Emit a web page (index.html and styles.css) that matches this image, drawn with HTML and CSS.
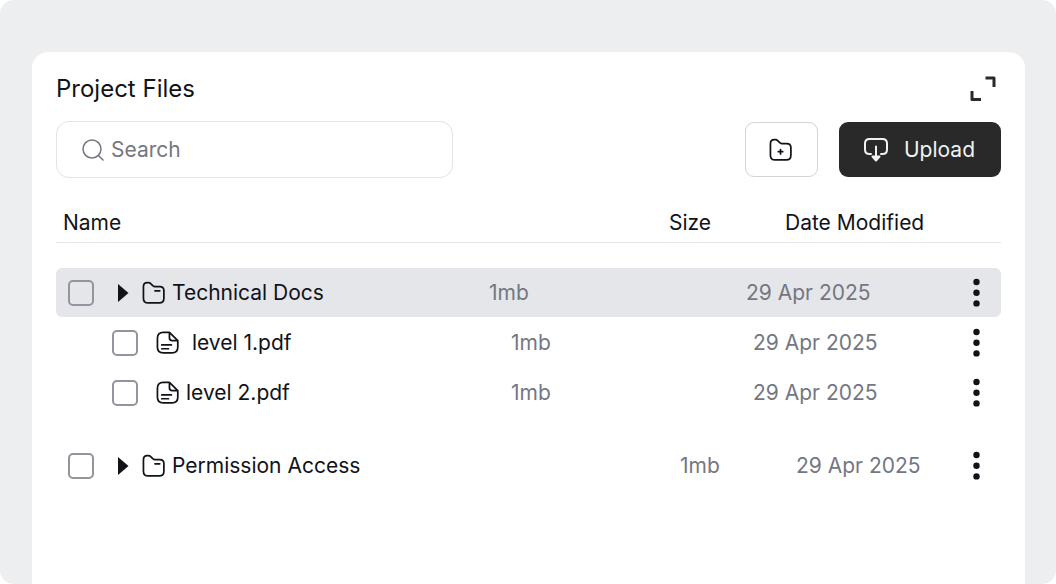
FILE: index.html
```html
<!DOCTYPE html>
<html lang="en">
<head>
  <meta charset="UTF-8">
  <meta name="viewport" content="width=device-width, initial-scale=1.0">
  <title>Project Files</title>
  <link rel="stylesheet" href="styles.css">
</head>
<body>
  <svg class="sprite" aria-hidden="true">
    <symbol id="folder" viewBox="0 0 25 25">
      <path d="M1.500 6C1.500 3.500 3 1.700 5.500 1.700h1c1.200 0 2 .4 2.800 1.200l1.900 1.900c.8.7 1.400 1 2.400 1h4.900c3 0 4.300 1.500 4.300 4.200v8c0 3.400-1.600 4.900-4.900 4.900H6.500c-3.400 0-5-1.600-5-5z" />
    </symbol>
    <symbol id="file" viewBox="0 0 25 25">
      <path d="M14 1.500H7.500C3.500 1.500 1.500 3.500 1.500 7.300v9.500c0 4 2 5.900 6 5.900h9.300c4 0 5.900-1.900 5.900-5.900V10zv5.500c0 2 1 3 3 3h5.700" />
      <path d="M6 14.500h10M6 18.500h7" />
    </symbol>
    <symbol id="dots" viewBox="0 0 26 30">
      <circle cx="13.500" cy="4" r="3.200" />
      <circle cx="13.500" cy="14.700" r="3.200" />
      <circle cx="13.500" cy="25.400" r="3.200" />
    </symbol>
  </svg>

  <div class="page">
    <main class="card">
      <header class="title-bar">
        <h1>Project Files</h1>
        <button class="icon-btn" type="button" aria-label="Expand">
          <svg class="expand" viewBox="0 0 26 26"><path d="M15.500 2H24v9M2 15v8.500h9" /></svg>
        </button>
      </header>

      <div class="toolbar">
        <label class="search">
          <svg class="search-icon" viewBox="0 0 22 22"><circle cx="10" cy="10" r="9" /><path d="M16.500 16.500l4.500 4.500" /></svg>
          <input type="search" placeholder="Search" aria-label="Search">
        </label>
        <div class="actions">
          <button class="new-folder" type="button" aria-label="New folder">
            <svg class="icon" viewBox="0 0 25 25"><use href="#folder" /><path d="M12 12v4.600M9.700 14.300h4.600" /></svg>
          </button>
          <button class="upload" type="button">
            <svg class="upload-icon" viewBox="0 0 26 26">
              <path d="M8 17H6.500c-3 0-4.500-1.500-4.500-4.500V6.500C2 3.500 3.500 2 6.500 2h13c3 0 4.500 1.500 4.500 4.500v6c0 3-1.500 4.500-4.500 4.500H18M13 9.500V21" />
              <path class="arrow" d="M9.500 19.500h7L13 23.500z" />
            </svg>
            Upload
          </button>
        </div>
      </div>

      <table class="files">
        <thead>
          <tr class="head">
            <th>Name</th>
            <th>Size</th>
            <th>Date Modified</th>
          </tr>
        </thead>
        <tbody>
          <tr class="open">
            <td class="name">
              <input type="checkbox" id="technical">
              <button class="toggle" type="button" aria-label="Toggle Technical Docs"><svg viewBox="0 0 14 20"><path d="M2 1l10.500 9L2 19z" /></svg></button>
              <svg class="icon" viewBox="0 0 25 25"><use href="#folder" /><path d="M13.500 10.200h5" /></svg>
              <label for="technical">Technical Docs</label>
            </td>
            <td>1mb</td>
            <td>29 Apr 2025</td>
            <td><button class="icon-btn" type="button" aria-label="More"><svg class="dots"><use href="#dots" /></svg></button></td>
          </tr>
          <tr class="child">
            <td class="name">
              <input type="checkbox" id="level1">
              <svg class="icon"><use href="#file" /></svg>
              <label for="level1">&nbsp;level 1.pdf</label>
            </td>
            <td>1mb</td>
            <td>29 Apr 2025</td>
            <td><button class="icon-btn" type="button" aria-label="More"><svg class="dots"><use href="#dots" /></svg></button></td>
          </tr>
          <tr class="child">
            <td class="name">
              <input type="checkbox" id="level2">
              <svg class="icon"><use href="#file" /></svg>
              <label for="level2">level 2.pdf</label>
            </td>
            <td>1mb</td>
            <td>29 Apr 2025</td>
            <td><button class="icon-btn" type="button" aria-label="More"><svg class="dots"><use href="#dots" /></svg></button></td>
          </tr>
        </tbody>
        <tbody>
          <tr class="closed">
            <td class="name">
              <input type="checkbox" id="permission">
              <button class="toggle" type="button" aria-label="Toggle Permission Access"><svg viewBox="0 0 14 20"><path d="M2 1l10.500 9L2 19z" /></svg></button>
              <svg class="icon" viewBox="0 0 25 25"><use href="#folder" /><path d="M13.500 10.200h5" /></svg>
              <label for="permission">Permission Access</label>
            </td>
            <td>1mb</td>
            <td>29 Apr 2025</td>
            <td><button class="icon-btn" type="button" aria-label="More"><svg class="dots"><use href="#dots" /></svg></button></td>
          </tr>
        </tbody>
      </table>
    </main>
  </div>
</body>
</html>
```

FILE: styles.css
```css
* { margin: 0; padding: 0; box-sizing: border-box; }
body {
  background: white;
  color: #111318;
  font-family: Inter, sans-serif;
  font-size: 21px;
  line-height: 29px;
}
button, input {
  font: inherit;
  color: inherit;
}
button {
  border: none;
  background: none;
  cursor: pointer;
}
svg {
  display: block;
  flex-shrink: 0;
  fill: none;
  stroke: currentColor;
  stroke-linecap: round;
  stroke-linejoin: round;
}
.sprite {
  position: absolute;
  width: 0;
  height: 0;
}
.page {
  display: flex;
  min-height: 100vh;
  padding: 52px 31px 0 32px;
  background: #edeef0;
  border-radius: 14px;
}
.card {
  flex: 1;
  padding: 20px 24px 0;
  background: white;
  border-radius: 16px 16px 0 0;
}
.title-bar {
  display: flex;
  justify-content: space-between;
  align-items: center;
  height: 33px;
  margin-bottom: 16px;
  padding-right: 5px;
}
h1 {
  font-size: 24px;
  font-weight: 400;
}
.expand {
  width: 26px;
  height: 26px;
  stroke: #292929;
  stroke-width: 3;
  stroke-linecap: butt;
}
.toolbar {
  display: flex;
  justify-content: space-between;
  align-items: center;
  margin-bottom: 24px;
}
.search {
  display: flex;
  align-items: center;
  gap: 7px;
  width: 42%;
  height: 57px;
  padding: 0 25px;
  border: 1px solid #e2e3e7;
  border-radius: 13px;
  color: #747782;
}
.search-icon {
  width: 22px;
  height: 22px;
  stroke-width: 1.5;
}
.search input {
  flex: 1;
  min-width: 0;
  border: none;
  outline: none;
  background: none;
}
.search input::placeholder {
  color: #747782;
}
.actions {
  display: flex;
  gap: 21px;
}
.new-folder {
  display: flex;
  justify-content: center;
  align-items: center;
  width: 73px;
  height: 55px;
  border: 1px solid #d3d4da;
  border-radius: 9px;
}
.upload {
  display: flex;
  align-items: center;
  gap: 15px;
  height: 55px;
  padding: 0 26px 0 24px;
  background: #292929;
  border-radius: 9px;
  color: #f0f1f3;
}
.upload-icon {
  width: 26px;
  height: 26px;
  stroke-width: 2;
}
.arrow {
  fill: currentColor;
}
.icon {
  width: 24px;
  height: 24px;
  stroke-width: 1.8;
}
.files {
  display: block;
}
thead, tbody {
  display: grid;
  gap: 1px;
}
tbody {
  padding-top: 25px;
}
tbody + tbody {
  padding-top: 24px;
}
tr {
  display: grid;
  align-items: center;
  height: 49px;
  padding: 0 12px;
  border-radius: 6px;
}
th {
  font-weight: 400;
  text-align: left;
}
td {
  color: #747782;
}
.head {
  grid-template-columns: 1fr 116px 204px;
  height: 41px;
  padding: 0 12px 0 7px;
  border-bottom: 1px solid #e5e6ea;
  border-radius: 0;
}
.open {
  grid-template-columns: 1fr 257px 217px 26px;
  background: #e5e6ea;
}
.child {
  grid-template-columns: 1fr 242px 210px 26px;
  padding-left: 56px;
}
.closed {
  grid-template-columns: 1fr 116px 167px 26px;
}
.name {
  display: flex;
  align-items: center;
  gap: 6px;
  color: #111318;
}
input[type="checkbox"] {
  appearance: none;
  width: 26px;
  height: 26px;
  margin-right: 12px;
  border: 2px solid #92959e;
  border-radius: 5px;
}
input[type="checkbox"]:checked {
  background: #292929;
}
.toggle {
  margin: 0 6px 0 4px;
}
.toggle svg {
  width: 14px;
  height: 20px;
  fill: #111318;
  stroke: none;
}
.icon-btn {
  display: block;
}
.dots {
  width: 26px;
  height: 30px;
  fill: #111318;
  stroke: none;
}
```
